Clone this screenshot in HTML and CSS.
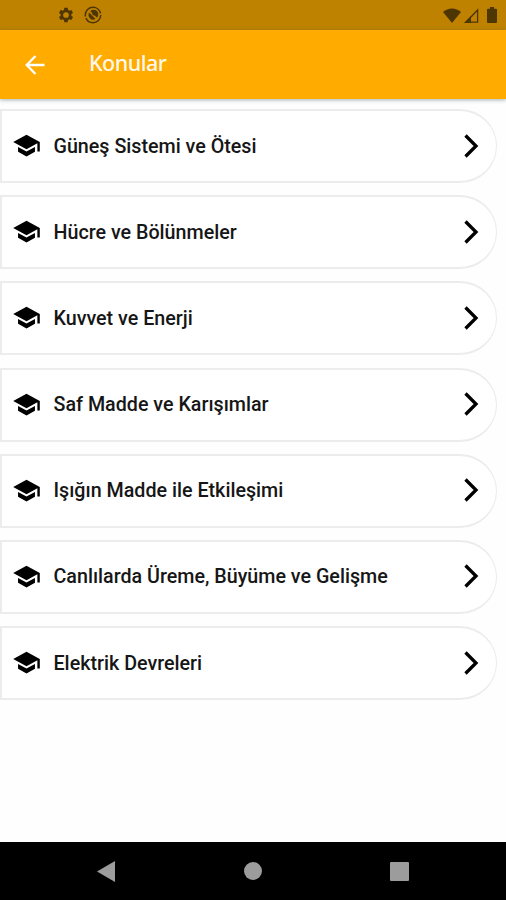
FILE: index.html
```html
<!DOCTYPE html>
<html lang="tr">
<head>
    <meta charset="UTF-8">
    <meta name="viewport" content="width=device-width, initial-scale=1.0">
    <title>Konular</title>
    <link rel="stylesheet" href="styles.css">
</head>
<body>
    <svg class="symbols">
        <symbol id="school" viewBox="0 0 24 24">
            <path d="M5 13.180v4L12 21l7-3.820v-4L12 17l-7-3.820zM12 3L1 9l11 6 9-4.910V17h2V9L12 3z"/>
        </symbol>
        <symbol id="chevron" viewBox="0 0 16 26">
            <path d="M2.500 2.500L13 13L2.500 23.500" fill="none" stroke="#000" stroke-width="3.300"/>
        </symbol>
    </svg>

    <div class="status-bar">
        <div class="status-left">
            <svg class="gear" viewBox="0 0 24 24"><path d="M19.140 12.940c.04-.3.060-.61.060-.94 0-.32-.02-.64-.07-.94l2.030-1.580c.18-.14.23-.41.120-.61l-1.920-3.320c-.12-.22-.37-.29-.59-.22l-2.390.96c-.5-.38-1.030-.7-1.620-.94l-.36-2.540c-.04-.24-.24-.41-.48-.41h-3.840c-.24 0-.43.17-.47.41l-.36 2.540c-.59.24-1.130.57-1.620.94l-2.390-.96c-.22-.08-.47 0-.59.22L2.740 8.870c-.12.21-.08.47.12.61l2.030 1.580c-.05.3-.09.63-.09.94s.02.64.07.94l-2.030 1.580c-.18.14-.23.41-.12.61l1.920 3.320c.12.22.37.29.59.22l2.390-.96c.5.38 1.030.7 1.620.94l.36 2.540c.05.24.24.41.48.41h3.840c.24 0 .44-.17.47-.41l.36-2.540c.59-.24 1.130-.56 1.620-.94l2.390.96c.22.08.47 0 .59-.22l1.920-3.320c.12-.22.070-.47-.12-.61l-2.010-1.580zM12 15.800a3.800 3.800 0 1 1 0-7.600 3.800 3.800 0 0 1 0 7.600z"/></svg>
            <svg class="sync" viewBox="0 0 18 18">
                <circle cx="9" cy="9" r="7.700" fill="none" stroke="#4e3603" stroke-width="1.500" stroke-dasharray="21 1.500 24 1.900"/>
                <path d="M5.200 6.500a4.700 4.700 0 0 0 6.300 6.500z"/>
                <path d="M6.300 5.100a4.700 4.700 0 0 1 6.700 6.600l-2-2-2.400-.6-.5-2.200z"/>
            </svg>
        </div>
        <div class="status-right">
            <svg class="wifi" viewBox="0 0 18 15"><path d="M9 15L0 4C4.800-.8 13.200-.8 18 4z"/></svg>
            <svg class="signal" viewBox="0 0 15 15">
                <path d="M13.600 2V14.200H2z" fill="none" stroke="#4e3603" stroke-width="1.300"/>
                <path d="M0 15L7 8v7z"/>
            </svg>
            <svg class="battery" viewBox="0 0 10 16"><path d="M3 0h4v1.800h2q1 0 1 1V15q0 1-1 1H1q-1 0-1-1V2.800q0-1 1-1h2z"/></svg>
        </div>
    </div>

    <header class="toolbar">
        <svg class="back" viewBox="0 0 20 20"><path d="M19.500 10H2M10.500 1L1.700 10l8.800 9" fill="none" stroke="#fff" stroke-width="2.300"/></svg>
        <h1>Konular</h1>
    </header>

    <main class="topics">
        <div class="topic">
            <svg class="school"><use href="#school"/></svg>
            <span>Güneş Sistemi ve Ötesi</span>
            <svg class="chevron"><use href="#chevron"/></svg>
        </div>
        <div class="topic">
            <svg class="school"><use href="#school"/></svg>
            <span>Hücre ve Bölünmeler</span>
            <svg class="chevron"><use href="#chevron"/></svg>
        </div>
        <div class="topic">
            <svg class="school"><use href="#school"/></svg>
            <span>Kuvvet ve Enerji</span>
            <svg class="chevron"><use href="#chevron"/></svg>
        </div>
        <div class="topic">
            <svg class="school"><use href="#school"/></svg>
            <span>Saf Madde ve Karışımlar</span>
            <svg class="chevron"><use href="#chevron"/></svg>
        </div>
        <div class="topic">
            <svg class="school"><use href="#school"/></svg>
            <span>Işığın Madde ile Etkileşimi</span>
            <svg class="chevron"><use href="#chevron"/></svg>
        </div>
        <div class="topic">
            <svg class="school"><use href="#school"/></svg>
            <span>Canlılarda Üreme, Büyüme ve Gelişme</span>
            <svg class="chevron"><use href="#chevron"/></svg>
        </div>
        <div class="topic">
            <svg class="school"><use href="#school"/></svg>
            <span>Elektrik Devreleri</span>
            <svg class="chevron"><use href="#chevron"/></svg>
        </div>
    </main>

    <nav class="nav-bar">
        <svg class="nav-back" viewBox="0 0 18 21"><path d="M18 0v21L0 10.500z"/></svg>
        <div class="nav-home"></div>
        <div class="nav-recent"></div>
    </nav>
</body>
</html>
```

FILE: styles.css
```css
* {
    box-sizing: border-box;
}
body {
    margin: 0;
    height: 900px;
    display: flex;
    flex-direction: column;
    overflow: hidden;
    background-color: #fefefe;
    font-family: Roboto, sans-serif;
}
svg {
    display: block;
    flex: none;
}
.symbols {
    display: none;
}
.status-bar {
    height: 30px;
    padding: 0 9px 0 57px;
    display: flex;
    align-items: center;
    justify-content: space-between;
    background-color: #be8200;
    fill: #4e3603;
}
.status-left,
.status-right {
    display: flex;
    align-items: center;
}
.gear {
    width: 18px;
    height: 18px;
    margin-right: 9px;
}
.sync {
    width: 18px;
    height: 18px;
}
.wifi {
    width: 18px;
    height: 15px;
    margin-right: 3px;
}
.signal {
    width: 15px;
    height: 15px;
    margin-right: 8px;
}
.battery {
    width: 10px;
    height: 16px;
}
.toolbar {
    height: 69px;
    padding-left: 25px;
    display: flex;
    align-items: center;
    background-color: #ffab00;
    box-shadow: 0 1px 4px rgba(60, 80, 90, 0.45);
}
.back {
    width: 20px;
    height: 20px;
    margin-right: 44px;
}
.toolbar h1 {
    margin: 0 0 4px;
    color: #fff8ea;
    font-family: "Noto Sans", sans-serif;
    font-size: 21.5px;
    font-weight: 500;
    letter-spacing: -0.5px;
}
.topics {
    flex: 1;
    padding: 10px 9px 0 0;
    display: flex;
    flex-direction: column;
    gap: 12.2px;
}
.topic {
    height: 74px;
    flex: none;
    padding: 0 17.5px 1px 10px;
    display: flex;
    align-items: center;
    border: 2px solid #ececec;
    border-right-width: 1px;
    border-radius: 0 37px 37px 0;
    background-color: #fff;
}
.school {
    width: 29px;
    height: 29px;
    margin-right: 12.5px;
}
.topic span {
    flex: 1;
    padding-top: 1px;
    color: #161616;
    font-size: 19.7px;
    font-weight: 500;
}
.chevron {
    width: 16px;
    height: 26px;
}
.nav-bar {
    height: 58px;
    padding: 0 97px;
    display: flex;
    align-items: center;
    justify-content: space-between;
    background-color: #000;
    fill: #9c9c9c;
}
.nav-back {
    width: 18px;
    height: 21px;
}
.nav-home {
    width: 18px;
    height: 18px;
    border-radius: 50%;
    background-color: #9c9c9c;
}
.nav-recent {
    width: 19px;
    height: 19px;
    border-radius: 1px;
    background-color: #9c9c9c;
}
```
